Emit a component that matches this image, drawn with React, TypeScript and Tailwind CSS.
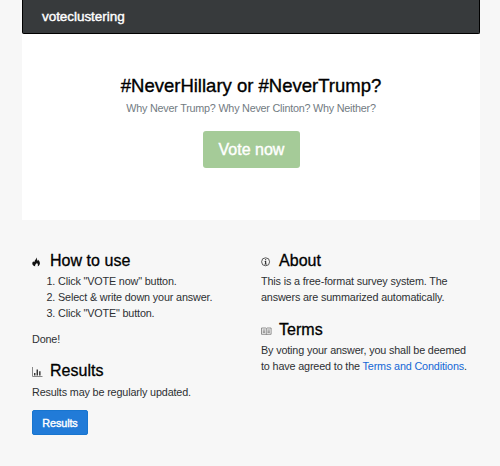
import type { ReactNode } from "react";

const FlameIcon = () => (
  <svg width="9" height="10" viewBox="0 0 9 10" className="mt-[3px]" fill="#111">
    <path d="M4.3 0.5C5.2 1.6 4.9 2.8 5.1 3.9C5.7 3.5 5.8 3 5.9 2.4C7 3.6 8.1 4.8 7.9 6.5C7.7 8.1 6.9 8.9 5.7 9.2C6.4 8 5.6 6.6 4.8 5.8C4.8 6.6 4.4 6.9 3.9 6.9C3.3 7.5 2.8 8.4 3.3 9.2C1.4 8.9 .3 7.9.3 6.4C.3 5.5 .8 4.9 1.4 4.3C1.6 4.9 1.9 5.1 2.4 5.1C2.4 3.2 4.6 2.6 4.3.5Z" />
  </svg>
);

const GraphIcon = () => (
  <svg width="11" height="10" viewBox="0 0 11 10" className="mt-[3px]">
    <path d="M.5 0V9.5H10.5" fill="none" stroke="#888" />
    <path d="M2.1 6H3.4V8.5H2.1ZM4.6 2.5H5.9V8.5H4.6ZM7.2 4.2H8.5V8.5H7.2Z" fill="#222" />
  </svg>
);

const InfoIcon = () => (
  <svg width="10" height="10" viewBox="0 0 10 10" className="mt-[3px]">
    <circle cx="4.6" cy="4.8" r="4" fill="none" stroke="#333" strokeWidth=".8" />
    <path d="M4 2.2H5.2V3.3H4ZM3.6 4.1H5.2V6.7H5.8V7.4H3.5V6.7H4.1V4.8H3.6Z" fill="#222" />
  </svg>
);

const BookIcon = () => (
  <svg width="11" height="9" viewBox="0 0 11 9" className="mt-[3px]" fill="none" stroke="#777" strokeWidth=".8">
    <path d="M.5 1H4.6L5.3 1.6L6 1H10.1V7.3H6L5.3 8L4.6 7.3H.5ZM5.3 1.6V8M1.7 3H4.2M1.7 4.3H4.2M1.7 5.6H4.2M6.4 3H8.9M6.4 4.3H8.9M6.4 5.6H8.9" />
  </svg>
);

const Heading = ({ icon, children }: { icon: ReactNode; children: ReactNode }) => (
  <h4 className="flex h-[19px] items-center text-[16px] leading-[19px] tracking-[0.03px] text-black [-webkit-text-stroke:0.3px_#000]">
    <span className="w-[18px] shrink-0">{icon}</span>
    {children}
  </h4>
);

export default function App() {
  return (
    <div className="h-[466px] overflow-hidden bg-[#f7f7f7] px-[22px] font-['Liberation_Sans',Arial,sans-serif] text-[10.8px] leading-[16px] tracking-[-0.15px] text-[#2d3033]">
      <nav className="-mr-[2px] h-[34px] rounded-b-[2px] border-x border-b border-black bg-[#373a3c] pl-[19px] pt-[8px] text-[13.5px] leading-[17px] tracking-[-0.05px] text-white [-webkit-text-stroke:0.4px_#fff]">
        voteclustering
      </nav>
      <header className="-mr-[2px] flex h-[186px] flex-col items-center bg-white pt-[40px]">
        <h1 className="h-[24px] whitespace-nowrap text-[18.5px] leading-[24px] tracking-normal text-black [-webkit-text-stroke:0.35px_#000]">
          #NeverHillary or #NeverTrump?
        </h1>
        <p className="mt-[2px] whitespace-nowrap tracking-[-0.23px] text-[#727b82]">
          Why Never Trump? Why Never Clinton? Why Neither?
        </p>
        <button className="ml-px mt-[15px] h-[37px] w-[97px] rounded-[3px] bg-[#a5cb98] text-[16px] tracking-normal text-white [-webkit-text-stroke:0.4px_#fff]">
          Vote now
        </button>
      </header>
      <main className="flex px-[10px] pt-[31px]">
        <section className="w-[229px] shrink-0">
          <Heading icon={<FlameIcon />}>How to use</Heading>
          <ol className="mt-[3px] list-decimal pl-[26px]">
            <li>Click "VOTE now" button.</li>
            <li>Select &amp; write down your answer.</li>
            <li>Click "VOTE" button.</li>
          </ol>
          <p className="mb-[14px] mt-[10px]">Done!</p>
          <Heading icon={<GraphIcon />}>Results</Heading>
          <p className="mt-[4px]">Results may be regularly updated.</p>
          <button className="mt-[10px] h-[25px] w-[56px] rounded-[2px] border border-[#1875cf] bg-[#217bd8] text-[10.8px] leading-[22px] tracking-[-0.1px] text-white [-webkit-text-stroke:0.4px_#fff]">
            Results
          </button>
        </section>
        <section className="whitespace-nowrap">
          <Heading icon={<InfoIcon />}>About</Heading>
          <p className="mt-[3px]">
            This is a free-format survey system. The
            <br />
            answers are summarized automatically.
          </p>
          <div className="h-[15px]" />
          <Heading icon={<BookIcon />}>Terms</Heading>
          <p className="mt-[3px]">
            By voting your answer, you shall be deemed
            <br />
            to have agreed to the <a className="text-[#1467d6]">Terms and Conditions</a>.
          </p>
        </section>
      </main>
    </div>
  );
}
